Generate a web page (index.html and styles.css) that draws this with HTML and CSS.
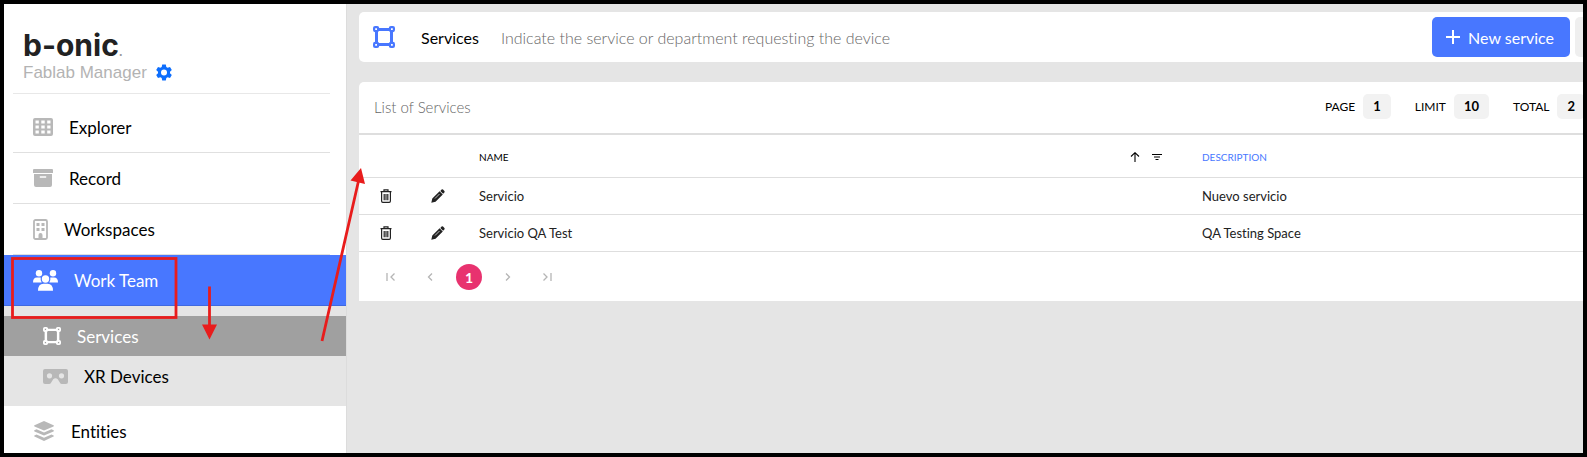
FILE: index.html
```html
<!DOCTYPE html>
<html lang="en">
<head>
<meta charset="utf-8">
<title>Fablab Manager - Services</title>
<link rel="stylesheet" href="styles.css">
</head>
<body>
<svg class="defs" aria-hidden="true">
  <symbol id="square" viewBox="0 0 22 22">
    <path d="M4 3.500h14M4 18.500h14M3.500 4v14M18.500 4v14" fill="none" stroke="currentColor" stroke-width="3"/>
    <g fill="none" stroke="currentColor" stroke-width="2.200">
      <rect x="1.100" y="1.100" width="4" height="4" rx="1"/><rect x="16.900" y="1.100" width="4" height="4" rx="1"/>
      <rect x="1.100" y="16.900" width="4" height="4" rx="1"/><rect x="16.900" y="16.900" width="4" height="4" rx="1"/>
    </g>
  </symbol>
  <symbol id="trash" viewBox="0 0 12 14">
    <path d="M4 2V.8h4V2M.5 2.600h11M1.600 3v9q0 1.300 1.200 1.300h6.400q1.200 0 1.200-1.300V3M4.200 5v6.200M6 5v6.200M7.800 5v6.200" fill="none" stroke="currentColor" stroke-width="1.200"/>
  </symbol>
  <symbol id="pencil" viewBox="0 0 14 14">
    <path d="M9.300 1.900 12.100 4.700 13.400 3.400Q14 2.700 13.400 2L12 .6Q11.300 0 10.600.6ZM8.600 2.200 1.300 9.500.3 13.700 4.500 12.700 11.800 5.400Z" fill="currentColor"/>
    <path d="m4 9.500 4.500-4.500" stroke="#fff" stroke-width=".7"/>
  </symbol>
</svg>
<div class="app">
  <aside class="sidebar">
    <header class="brand">
      <div class="logo">b-onic<span class="logo-dot">.</span></div>
      <div class="product">Fablab Manager
        <button class="gear" aria-label="Settings">
          <svg width="18" height="18" viewBox="0 0 18 18"><path fill="currentColor" fill-rule="evenodd" d="M7.200.5h3.600l.5 2.400 1.300.8 2.400-.8 1.800 3.100-1.800 1.700v1.500l1.800 1.700-1.800 3.100-2.400-.8-1.300.8-.5 2.500H7.200l-.5-2.500-1.300-.8-2.400.8-1.800-3.100L3 9.200V7.700L1.200 6 3 2.900l2.400.8 1.300-.8ZM9 5.600a3 3 0 1 0 0 6 3 3 0 0 0 0-6Z"/></svg>
        </button>
      </div>
    </header>
    <nav class="nav">
      <a class="item" href="#explorer">
        <svg width="20" height="18" viewBox="0 0 20 18"><path fill="currentColor" fill-rule="evenodd" d="M2 0h16q2 0 2 2v14q0 2-2 2H2q-2 0-2-2V2Q0 0 2 0ZM2.500 2.500v3h3.300v-3ZM8.300 2.500v3h3.400v-3ZM14.200 2.500v3h3.300v-3ZM2.500 7.500v3h3.300v-3ZM8.300 7.500v3h3.400v-3ZM14.200 7.500v3h3.300v-3ZM2.500 12.500v3h3.300v-3ZM8.300 12.500v3h3.400v-3ZM14.200 12.500v3h3.300v-3Z"/></svg>
        <span>Explorer</span></a>
      <a class="item" href="#record">
        <svg width="20" height="18" viewBox="0 0 20 18"><path fill="currentColor" fill-rule="evenodd" d="M1 0h18q1 0 1 1v3H0V1Q0 0 1 0ZM1 5h18v11q0 2-2 2H3q-2 0-2-2ZM7 7.300q-.8.700 0 1.400h6q.8-.7 0-1.400Z"/></svg>
        <span>Record</span></a>
      <a class="item" href="#workspaces">
        <svg width="15" height="21" viewBox="0 0 15 21"><rect x="1" y="1" width="13" height="19" rx="1.500" fill="none" stroke="currentColor" stroke-width="1.800"/><path fill="currentColor" d="M3.500 4h3v3h-3zM8.500 4h3v3h-3zM3.500 9h3v3h-3zM8.500 9h3v3h-3zM5.500 20v-4a2 2 0 0 1 4 0v4Z"/></svg>
        <span>Workspaces</span></a>
      <a class="item active" href="#team">
        <svg width="25" height="21" viewBox="0 0 25 21"><g fill="currentColor"><circle cx="6" cy="3.200" r="3.200"/><circle cx="20" cy="3.200" r="3.200"/><circle cx="12.500" cy="9" r="3.700"/><path d="M0 12.500q0-5 4-5h3.700q-.5 3 1 5H0ZM25 12.500q0-5-4-5h-3.700q.5 3-1 5H25ZM5 20.800q0-7 5.500-7h4q5.500 0 5.500 7Z"/></g></svg>
        <span>Work Team</span></a>
      <div class="submenu">
        <a class="subitem current" href="#services"><svg width="18" height="18"><use href="#square"/></svg><span>Services</span></a>
        <a class="subitem" href="#xr"><svg width="25" height="15" viewBox="0 0 25 15"><path fill="currentColor" fill-rule="evenodd" d="M2 0h21q2 0 2 2v11q0 2-2 2h-4q-1.500 0-2.200-1.500l-2-3.300q-2.300-2-4.600 0l-2 3.300Q7.500 15 6 15H2q-2 0-2-2V2Q0 0 2 0ZM6.500 4.200a2.600 2.600 0 1 0 0 5.200 2.600 2.600 0 0 0 0-5.200ZM18.500 4.200a2.600 2.600 0 1 0 0 5.200 2.600 2.600 0 0 0 0-5.200Z"/></svg><span>XR Devices</span></a>
      </div>
      <a class="item" href="#entities">
        <svg width="22" height="20" viewBox="0 0 22 20"><path fill="currentColor" d="M11 0 20.500 4.200q1 .6 0 1.200L11 9.500 1.500 5.400q-1-.6 0-1.200ZM3.500 8.300 11 11.500l7.500-3.200 2 .9q1 .6 0 1.200L11 14.600 1.500 10.400q-1-.6 0-1.200ZM3.500 13.500 11 16.700l7.500-3.200 2 .9q1 .6 0 1.200L11 20 1.500 15.600q-1-.6 0-1.200Z"/></svg>
        <span>Entities</span></a>
    </nav>
  </aside>

  <main class="main">
    <div class="content">
      <section class="card heading">
        <svg class="heading-icon" width="22" height="22"><use href="#square"/></svg>
        <h1>Services</h1>
        <p>Indicate the service or department requesting the device</p>
        <button class="primary"><svg width="14" height="14" viewBox="0 0 14 14"><path d="M7 0v14M0 7h14" stroke="currentColor" stroke-width="2"/></svg>New service</button>
        <button class="secondary" aria-label="More"></button>
      </section>
      <section class="card list">
        <div class="toolbar">
          <h2>List of Services</h2>
          <div class="stat">PAGE <b>1</b></div>
          <div class="stat">LIMIT <b>10</b></div>
          <div class="stat">TOTAL <b>2</b></div>
        </div>
        <table class="grid">
          <colgroup><col class="c-delete"><col class="c-edit"><col class="c-name"><col></colgroup>
          <thead>
            <tr>
              <th></th><th></th>
              <th><div class="th">NAME
                <svg class="sort" width="10" height="10" viewBox="0 0 10 10"><path d="M5 10V1M1 4.500 5 .7l4 3.800" fill="none" stroke="currentColor" stroke-width="1.100"/></svg>
                <svg width="10" height="8" viewBox="0 0 10 8"><path d="M0 1.500h10M2 4h6M3.500 6.500h3" stroke="currentColor" stroke-width="1.100"/></svg></div></th>
              <th class="link">DESCRIPTION</th>
            </tr>
          </thead>
          <tbody>
            <tr>
              <td class="act"><button aria-label="Delete Servicio"><svg width="12" height="14"><use href="#trash"/></svg></button></td>
              <td class="act"><button aria-label="Edit Servicio"><svg width="14" height="14"><use href="#pencil"/></svg></button></td>
              <td>Servicio</td><td>Nuevo servicio</td>
            </tr>
            <tr>
              <td class="act"><button aria-label="Delete Servicio QA Test"><svg width="12" height="14"><use href="#trash"/></svg></button></td>
              <td class="act"><button aria-label="Edit Servicio QA Test"><svg width="14" height="14"><use href="#pencil"/></svg></button></td>
              <td>Servicio QA Test</td><td>QA Testing Space</td>
            </tr>
          </tbody>
        </table>
        <div class="pager">
          <button aria-label="First page"><svg width="10" height="8" viewBox="0 0 10 8"><path d="M1 0v8M8.500.5 5 4l3.500 3.500"/></svg></button>
          <button aria-label="Previous page"><svg width="10" height="8" viewBox="0 0 10 8"><path d="M7 .5 3.500 4 7 7.500"/></svg></button>
          <button class="page">1</button>
          <button aria-label="Next page"><svg width="10" height="8" viewBox="0 0 10 8"><path d="M3 .5 6.500 4 3 7.500"/></svg></button>
          <button aria-label="Last page"><svg width="10" height="8" viewBox="0 0 10 8"><path d="M1.500.5 5 4 1.500 7.500M9 0v8"/></svg></button>
        </div>
      </section>
    </div>
  </main>
  <svg class="marks" width="380" height="350" viewBox="0 0 380 350" aria-hidden="true">
    <g fill="none" stroke="#e81c1c" stroke-width="2.800">
      <rect x="12.500" y="258.500" width="163.500" height="59"/>
      <path d="M209.500 286.500V328M322 341 358.500 181"/>
    </g>
    <path fill="#e81c1c" d="M202 324.500h15l-7.500 15ZM361 168l4 16-14.500-3.500Z"/>
  </svg>
</div>
</body>
</html>
```
FILE: styles.css
```css
* { box-sizing: border-box; }
body {
  margin: 0;
  font-family: Lato, "Liberation Sans", sans-serif;
  font-size: 16px;
  font-variant-ligatures: none;
  color: #000;
}
button {
  font: inherit;
  color: inherit;
  padding: 0;
  border: 0;
  background: none;
}
svg { flex: none; display: block; }
.defs { position: absolute; width: 0; height: 0; }

.app {
  position: relative;
  display: grid;
  grid-template-columns: 343px minmax(0, 1fr);
  height: 100vh;
  border: 4px solid #000;
  background: #e5e5e5;
  overflow: hidden;
}
.marks { position: absolute; top: -4px; left: -4px; pointer-events: none; }

.sidebar {
  background: #fff;
  border-right: 1px solid #dcdcdc;
  overflow: hidden;
}
.brand {
  margin: 0 16px 0 9px;
  padding: 24px 0 10px 10px;
  border-bottom: 1px solid #e8e8e8;
}
.logo {
  font: 700 30px/34px Inter, sans-serif;
  color: #222;
}
.logo-dot { font-size: 12px; line-height: 12px; color: #999; }
.product {
  display: flex;
  align-items: center;
  gap: 8px;
  font: 17px/21px "Liberation Sans", Arial, sans-serif;
  color: #b3b3b3;
}
.gear { color: #0d6efd; }

.nav { padding-top: 8px; font-size: 17px; }
.item {
  display: flex;
  align-items: center;
  gap: 16px;
  height: 51px;
  margin: 0 16px 0 9px;
  padding-left: 20px;
  border-bottom: 1px solid #e0e0e0;
  color: #000;
  text-decoration: none;
}
.item svg, .subitem svg { color: #b8b8b8; }
.item.active {
  margin: 0;
  padding-left: 29px;
  background: #4877ff;
  border-color: #3f69e0;
  color: #fff;
}
.item.active svg, .subitem.current svg { color: #fff; }
.submenu { padding: 10px 0; background: #e5e5e5; }
.subitem {
  display: flex;
  align-items: center;
  gap: 16px;
  height: 40px;
  padding-left: 39px;
  color: #000;
  text-decoration: none;
}
.subitem.current { background: #a0a0a0; color: #fff; }

.main { min-width: 0; overflow: hidden; padding: 8px 0 0 12px; }
.content { margin-right: -40px; display: grid; gap: 20px; }
.card { background: #fff; border-radius: 5px 5px 0 0; }
.heading {
  display: flex;
  align-items: center;
  height: 50px;
  padding: 0 8px 0 14px;
  border-radius: 5px;
}
.heading-icon { color: #4877ff; margin-right: 26px; }
h1, h2, p { margin: 0; font-size: 16px; font-weight: 400; }
h1 { margin-right: 22px; }
.heading p { color: #666; font-weight: 300; margin-right: auto; }
.primary {
  display: flex;
  align-items: center;
  gap: 8px;
  height: 40px;
  padding: 0 16px 0 14px;
  margin-right: 5px;
  border-radius: 5px;
  background: #4877ff;
  color: #fff;
}
.secondary { width: 40px; height: 40px; border-radius: 5px; background: #efefef; }

.toolbar {
  display: flex;
  align-items: center;
  gap: 24px;
  height: 53px;
  border-bottom: 2px solid #dedede;
  padding: 0 38px 2px 15px;
}
.toolbar h2 { margin-right: auto; font-size: 15px; font-weight: 300; color: #666; }
.stat { display: flex; align-items: center; gap: 8px; font-size: 12px; }
.stat b {
  padding: 0 10px;
  border-radius: 5px;
  background: #f2f2f2;
  font-size: 13px;
  line-height: 25px;
}

.grid { width: 100%; table-layout: fixed; border-collapse: collapse; }
.c-delete { width: 54px; }
.c-edit { width: 50px; }
.c-name { width: 57.2%; }
.grid th, .grid td { padding: 0 16px; text-align: left; border-bottom: 1px solid #dedede; }
.grid th { height: 42px; padding-top: 2px; font-size: 10px; font-weight: 400; }
.grid td { height: 37px; font-size: 13px; color: #222; }
.grid .link { color: #4877ff; }
.grid .act { padding: 0; }
.act button { display: block; margin: 0 auto; }
.th { display: flex; align-items: center; gap: 12px; padding-right: 8px; }
.sort { margin-left: auto; }

.pager { display: flex; align-items: center; gap: 13px; height: 49px; padding: 2px 19px 0; }
.pager button { display: grid; place-items: center; width: 26px; height: 26px; }
.pager path { fill: none; stroke: #b5b5b5; stroke-width: 1.3; }
.pager .page { border-radius: 50%; background: #e8326f; color: #fff; font-size: 14px; font-weight: 700; }
```
